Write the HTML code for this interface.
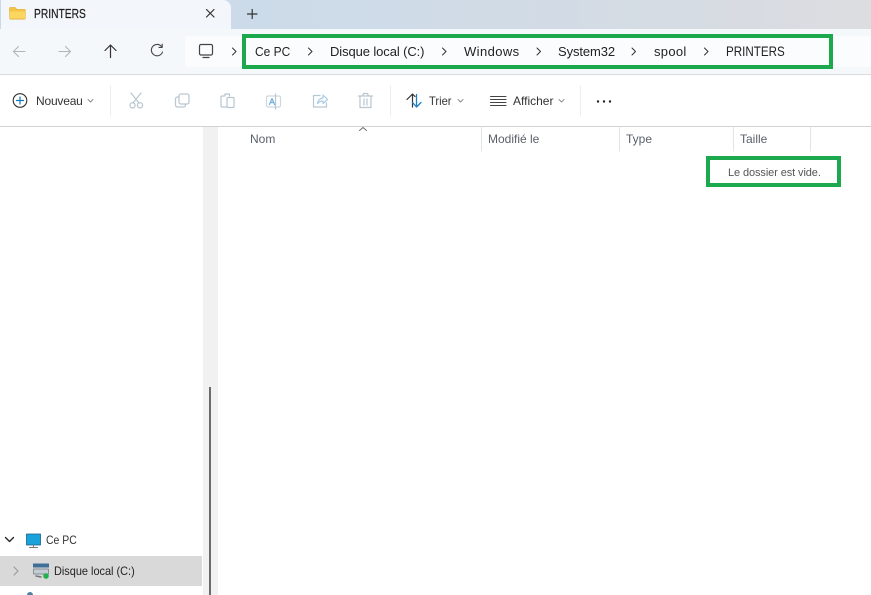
<!DOCTYPE html>
<html><head><meta charset="utf-8"><style>
html,body{margin:0;padding:0;background:#fff}
#r{position:relative;width:871px;height:595px;overflow:hidden;background:#fff;font-family:"Liberation Sans",sans-serif;color:#222}
#r div,#r span{position:absolute;white-space:nowrap}
.t{line-height:16px;transform-origin:0 50%}
.a{top:44px;font-size:13px}
.h{top:131px;font-size:12px;color:#5a606a}
svg{position:absolute;left:0;top:0}
</style></head><body><div id="r">
<div style="left:0;top:0;width:871px;height:29px;background:linear-gradient(90deg,#c9d9e8 0,#cddbe9 300px,#d2dbe5 560px,#dcdde0 871px)"></div>
<div style="left:1px;top:0;width:230px;height:30px;background:#f3f7fb;border-radius:0 8px 0 0"></div>
<div style="left:0;top:29px;width:871px;height:45px;background:#f5f8fb"></div>
<div style="left:185px;top:36px;width:686px;height:31px;background:#fbfcfd;border-radius:4px 0 0 4px"></div>
<div style="left:0;top:74px;width:871px;height:1px;background:#d9dcdf"></div>
<div style="left:0;top:126px;width:871px;height:1px;background:#cfd3d5"></div>
<div style="left:203px;top:127px;width:15px;height:468px;background:#f1f1f1"></div>
<div style="left:209px;top:387px;width:2px;height:208px;background:#6b6b6b"></div>
<div style="left:0;top:556px;width:202px;height:30px;background:#d9d9d9"></div>

<div style="left:242px;top:34px;width:583px;height:27px;border:4px solid #1ca84d"></div>
<div style="left:706px;top:156px;width:127px;height:23px;border:4px solid #1ca84d"></div>

<svg width="871" height="595" fill="none" stroke-linecap="round" stroke-linejoin="round">
<path d="M9.500 8.500a1 1 0 0 1 1-1h4.500l2 2h7.500a.8.8 0 0 1 .8.8v8a.8.8 0 0 1-.8.8h-14a.8.8 0 0 1-.8-.8z" fill="#f3c544" stroke="#e3ae3a" stroke-width=".7"/>
<path d="M9.800 11.500h15.400v7h-15.400z" fill="#fbd762"/>
<path d="M206.500 9.500l7.500 7.500m0-7.500l-7.500 7.500M247.500 14h9.500M252.200 9.500v9" stroke="#333" stroke-width="1.200"/>
<path d="M13.500 51.500h11.500M13.500 51.500l5-5M13.500 51.500l5 5M59 51.500h11.500M70.500 51.500l-5-5M70.500 51.500l-5 5" stroke="#b0b5ba" stroke-width="1.100"/>
<path d="M110.500 57.500v-12M105 50.500l5.500-5.500l5.500 5.500" stroke="#333" stroke-width="1.200"/>
<path d="M162.500 52a5.700 5.700 0 1 1-.6-5M162.200 44.200v3.200h-3.200" stroke="#444" stroke-width="1.100"/>
<rect x="199.500" y="44.500" width="13" height="10.500" rx="1.500" stroke="#444" stroke-width="1.200"/>
<path d="M203 57.500h6" stroke="#444" stroke-width="1.200"/>
<path d="M232.500 48l3.500 3.500l-3.500 3.500M308.500 48l3.500 3.500l-3.500 3.500M442.500 48l3.500 3.500l-3.500 3.500M537 48l3.500 3.500l-3.500 3.500M632 48l3.500 3.500l-3.500 3.500M704.500 48l3.500 3.500l-3.500 3.500" stroke="#333" stroke-width="1"/>
<circle cx="20" cy="100.500" r="6.800" stroke="#333" stroke-width="1.100"/>
<path d="M20 97v7M16.500 100.500h7" stroke="#1278b8" stroke-width="1.200"/>
<path d="M88 99.500l2.500 2.500l2.500-2.500M458 99.500l2.500 2.500l2.500-2.500M559 99.500l2.500 2.500l2.500-2.500" stroke="#888" stroke-width=".9"/>
<path d="M110.500 86v30M390.500 86v30M580.500 86v30" stroke="#eceef0" stroke-width="1"/>
<g stroke="#b8c6d0" stroke-width="1.200">
<path d="M131 93l8 10M141 93l-8 10"/><circle cx="132.500" cy="105.300" r="2.600"/><circle cx="140" cy="105.300" r="2.600"/>
<rect x="179" y="94" width="10" height="10" rx="1.800"/><path d="M179 97h-1.500a2 2 0 0 0-2 2v6a2 2 0 0 0 2 2h6a2 2 0 0 0 2-2v-1"/>
<path d="M224 96h-2a1 1 0 0 0-1 1v9a1 1 0 0 0 1 1h4M225 96v-2h4.500v2"/><rect x="227" y="97.500" width="7" height="10" rx="1"/>
<rect x="266.500" y="96" width="14" height="11" rx="1.500" stroke="#cdd8e0"/><path d="M275.500 94v15"/><path d="M269.500 104.500l2.500-6l2.500 6M270.500 102.500h3" stroke="#6fb0dc"/>
<path d="M320 95.500h-6.500v11.500h13v-4"/><path d="M317.500 103.500c.5-3.500 3-5.500 5.500-5.500v-3l4.500 4.500l-4.500 4v-2.500c-2.500 0-4 1-5.500 2.500z" stroke="#aacde5"/>
<path d="M358.500 96h14M362.500 96l1-2.500h4l1 2.500M360 96v11.500h11v-11.500M364 99v6M367 99v6"/>
</g>
<path d="M412.500 107v-12.500M407 99.500l5.500-5.500l2.500 2.500" stroke="#333" stroke-width="1.200"/>
<path d="M416.500 94.500v12.500M412.500 102.500l4 4.500l4.500-4.500" stroke="#1f7fc1" stroke-width="1.300"/>
<path d="M490.500 96.500h15.500M490.500 99.500h15.500M490.500 102.500h15.500M490.500 105.500h15.500" stroke="#444" stroke-width="1.100"/>
<circle cx="598" cy="101.500" r="1.200" fill="#222"/><circle cx="604" cy="101.500" r="1.200" fill="#222"/><circle cx="610" cy="101.500" r="1.200" fill="#222"/>
<path d="M359.500 130.500l3.500-3l3.500 3" stroke="#666" stroke-width=".9"/>
<path d="M481.500 127v24M619.500 127v24M733.500 127v24M810.500 127v24" stroke="#e3e5e7" stroke-width="1"/>
<path d="M5.500 537.500l4 4l4-4" stroke="#222" stroke-width="1.300"/>
<path d="M14 567l4 4l-4 4" stroke="#999" stroke-width="1.100"/>
<rect x="26.500" y="534" width="14" height="11" fill="#19a3da" stroke="#1a5f85" stroke-width=".8"/>
<path d="M33.500 545v2.500M29.500 547.500h8" stroke="#777" stroke-width="1"/>
<rect x="33" y="563.500" width="16" height="4" fill="#3f6f96"/>
<rect x="33.500" y="569" width="15" height="5" fill="#c4ccd4" stroke="#6d7780" stroke-width=".7"/>
<path d="M36 576l5 1" stroke="#777" stroke-width="1.500"/>
<circle cx="46" cy="576" r="2.800" fill="#22b24c"/>
<path d="M27 595a3 3 0 0 1 6 0" fill="#4c7fa0"/>
</svg>

<span class="t" style="left:34px;top:6px;font-size:12.500px;transform:scaleX(.82);-webkit-text-stroke:.2px #1c1c1c;color:#1c1c1c">PRINTERS</span>
<span class="t a" style="left:255px;transform:scaleX(.92)">Ce PC</span>
<span class="t a" style="left:330px;letter-spacing:-.1px">Disque local (C:)</span>
<span class="t a" style="left:464px;letter-spacing:.4px">Windows</span>
<span class="t a" style="left:558px;letter-spacing:-.1px">System32</span>
<span class="t a" style="left:654px;letter-spacing:.3px">spool</span>
<span class="t a" style="left:726px;font-size:13.500px;transform:scaleX(.86)">PRINTERS</span>
<span class="t" style="left:36px;top:93px;font-size:12px;letter-spacing:-.2px;color:#333">Nouveau</span>
<span class="t" style="left:429px;top:93px;font-size:12px;transform:scaleX(.93);color:#333">Trier</span>
<span class="t" style="left:513px;top:93px;font-size:12px;color:#333">Afficher</span>
<span class="t h" style="left:250px">Nom</span>
<span class="t h" style="left:488px">Modifié le</span>
<span class="t h" style="left:626px">Type</span>
<span class="t h" style="left:740px">Taille</span>
<span class="t" style="left:728px;top:165px;font-size:11px;letter-spacing:-.1px;color:#555">Le dossier est vide.</span>
<span class="t" style="left:46px;top:532px;font-size:12px;transform:scaleX(.87);color:#333">Ce PC</span>
<span class="t" style="left:54px;top:563px;font-size:12px;transform:scaleX(.91);color:#222">Disque local (C:)</span>
</div></body></html>
